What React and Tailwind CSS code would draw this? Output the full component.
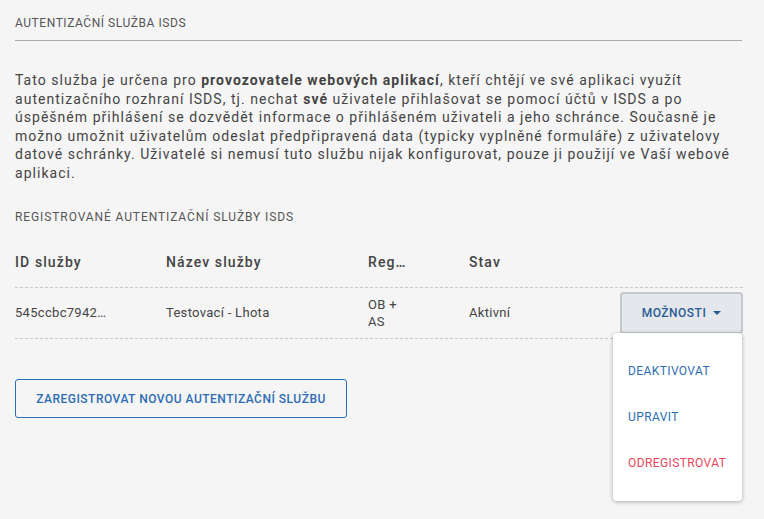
import React from "react";

const rows = [
  { id: "545ccbc7942…", name: "Testovací - Lhota", reg: ["OB +", "AS"], stav: "Aktivní" },
];

export default function App() {
  return (
    <div
      className="min-h-[519px] w-full bg-[#f5f5f5] px-[15px] text-[#444]"
      style={{ fontFamily: "Roboto, 'Noto Sans', sans-serif" }}
    >
      {/* nadpis */}
      <div className="w-[727px] border-b border-[#aaa] pt-[15px] pb-[9px]">
        <h2 className="text-[12px] leading-[16px] tracking-[0.55px] text-[#555]">
          AUTENTIZAČNÍ SLUŽBA ISDS
        </h2>
      </div>

      <p className="mt-[30px] w-[727px] whitespace-nowrap text-[14px] leading-[18.5px] tracking-[1.03px] text-[#444]">
        Tato služba je určena pro <b className="font-bold">provozovatele webových aplikací</b>, kteří
        chtějí ve své aplikaci využít
        <br />
        autentizačního rozhraní ISDS, tj. nechat <b className="font-bold">své</b> uživatele
        přihlašovat se pomocí účtů v ISDS a po
        <br />
        úspěšném přihlášení se dozvědět informace o přihlášeném uživateli a jeho schránce. Současně je
        <br />
        možno umožnit uživatelům odeslat předpřipravená data (typicky vyplněné formuláře) z uživatelovy
        <br />
        datové schránky. Uživatelé si nemusí tuto službu nijak konfigurovat, pouze ji použijí ve Vaší
        webové
        <br />
        aplikaci.
      </p>

      <h3 className="mt-[27px] text-[12px] leading-[16px] tracking-[0.9px] text-[#555]">
        REGISTROVANÉ AUTENTIZAČNÍ SLUŽBY ISDS
      </h3>

      {/* tabulka */}
      <div className="w-[728px]">
        <div className="mt-[27px] flex border-b border-dashed border-[#c8c8c8] pb-[15px] text-[14px] leading-[20px] font-medium tracking-[1.1px] text-[#444]">
          <div className="w-[151px]">ID služby</div>
          <div className="w-[202px]">Název služby</div>
          <div className="w-[101px] pr-[60px]">
            <div className="truncate">Registrace</div>
          </div>
          <div className="flex-1">Stav</div>
        </div>
        {rows.map((r) => (
          <div
            key={r.id}
            className="relative flex h-[51px] items-center border-b border-dashed border-[#c8c8c8] text-[13px] tracking-[0.3px] text-[#444]"
          >
            <div className="w-[151px]">{r.id}</div>
            <div className="w-[202px]">{r.name}</div>
            <div className="w-[101px] leading-[17px]">
              {r.reg.map((x) => (
                <div key={x}>{x}</div>
              ))}
            </div>
            <div className="flex-1">{r.stav}</div>
            <div className="relative">
              <button className="flex h-[42px] w-[123px] items-center justify-center gap-[7px] rounded-[4px] border-2 border-[#c4c8cc] bg-[#e4e8ec] text-[12px] font-medium tracking-[0.5px] text-[#2b5c94]">
                MOŽNOSTI
                <svg width="8" height="4" viewBox="0 0 8 4">
                  <path d="M0 0h8L4 4z" fill="#2b5c94" />
                </svg>
              </button>
              <div className="absolute top-[41px] right-[1px] z-10 w-[129px] rounded-[4px] bg-white py-[15px] shadow-[0_1px_4px_rgba(0,0,0,0.3)]">
                {[
                  ["DEAKTIVOVAT", "text-[#2e6db0]"],
                  ["UPRAVIT", "text-[#2e6db0]"],
                  ["ODREGISTROVAT", "text-[#e8475a]"],
                ].map(([t, c]) => (
                  <div
                    key={t}
                    className={`flex h-[46px] items-center px-[15px] text-[12px] tracking-[0.4px] ${c}`}
                  >
                    {t}
                  </div>
                ))}
              </div>
            </div>
          </div>
        ))}
      </div>

      <button className="mt-[40px] h-[39px] w-[332px] rounded-[3px] border border-[#2e6db4] text-[12px] font-medium tracking-[0.5px] text-[#2e6db4]">
        ZAREGISTROVAT NOVOU AUTENTIZAČNÍ SLUŽBU
      </button>
    </div>
  );
}
